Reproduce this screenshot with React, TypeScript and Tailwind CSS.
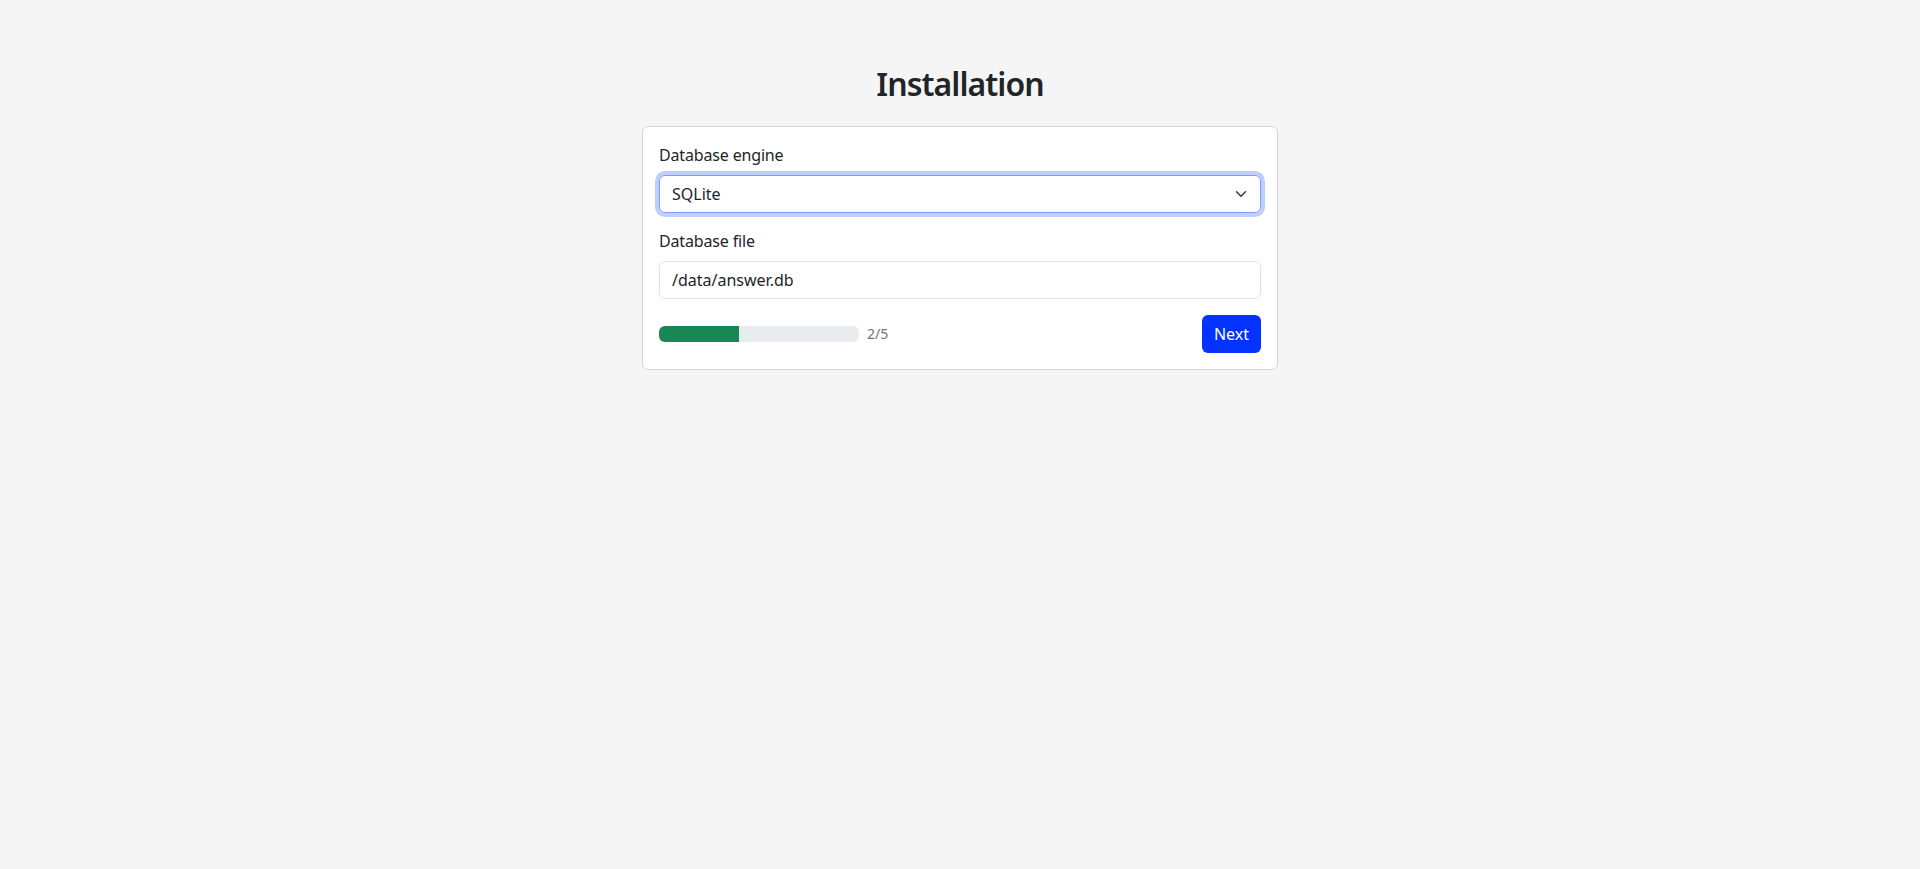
import React from 'react';

const font = { fontFamily: '"Noto Sans", "Open Sans", Arial, sans-serif' };

function Chevron() {
  return (
    <svg viewBox="0 0 16 16" className="w-4 h-3" fill="none" stroke="#343a40" strokeWidth="2" strokeLinecap="round" strokeLinejoin="round">
      <path d="m2 5 6 6 6-6" />
    </svg>
  );
}

export default function App() {
  return (
    <div className="min-h-screen bg-[#f5f5f5] text-[#212529]" style={font}>
      <div className="flex flex-col items-center pt-[65px]">
        <h1 className="text-[32px] font-semibold tracking-[-0.03em] leading-[1.2] mb-[23px]">Installation</h1>
        <div className="w-[636px] bg-white border border-[#d3d3d3] rounded-md p-4">
          <div className="mb-4">
            <label className="block text-base leading-6 mb-2 tracking-[-0.01em]">Database engine</label>
            <div className="relative">
              <div className="h-[38px] flex items-center pl-3 pr-9 rounded-md border border-[#8199ff] shadow-[0_0_0_4px_#c1ccff] text-base">
                SQLite
              </div>
              <div className="absolute right-3 top-1/2 -translate-y-1/2 flex">
                <Chevron />
              </div>
            </div>
          </div>
          <div className="mb-4">
            <label className="block text-base leading-6 mb-2 tracking-[-0.01em]">Database file</label>
            <div className="h-[38px] flex items-center px-3 rounded-md border border-[#dee2e6] text-base">
              /data/answer.db
            </div>
          </div>
          <div className="flex items-center justify-between">
            <div className="flex items-center gap-2">
              <div className="w-[200px] h-4 rounded-md bg-[#e9ecef] overflow-hidden">
                <div className="h-full w-2/5 bg-[#198754]" />
              </div>
              <span className="text-sm text-[#6c757d]">2/5</span>
            </div>
            <button className="h-[38px] px-3 rounded-md bg-[#0433ff] text-white text-base">Next</button>
          </div>
        </div>
      </div>
    </div>
  );
}
